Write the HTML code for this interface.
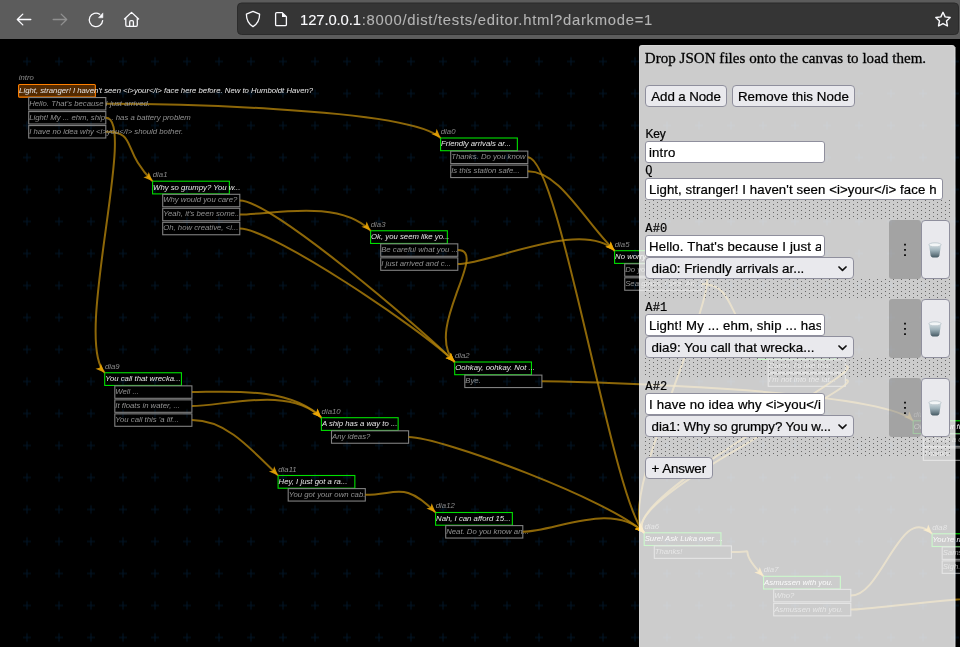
<!DOCTYPE html>
<html><head><meta charset="utf-8"><title>editor</title>
<style>
*{box-sizing:border-box;margin:0;padding:0}
html,body{width:960px;height:647px;overflow:hidden;background:#000}
body{position:relative;font-family:"Liberation Sans",sans-serif}
#tb{position:absolute;left:0;top:0;width:960px;height:39px;background:#5c5c5c}
#url{will-change:transform}
#url{position:absolute;left:300.3px;top:11px;font-size:14.8px;line-height:18px;white-space:nowrap;color:#b4b4b4;-webkit-text-stroke:0.1px currentColor}
#url .u1{color:#fbfbfe;letter-spacing:-0.1px}
#url .u2{letter-spacing:0.73px;margin-left:0.9px}
#cv{position:absolute;left:0;top:39px;will-change:transform}
#cv text{font-family:"Liberation Sans",sans-serif;font-style:italic;font-size:7.75px}
#cv .lb{fill:#8a8a8a}
#cv .qt{fill:#e8e8e8}
#cv .at{fill:#929292}
#panel{position:absolute;left:639px;top:45px;width:316px;height:620px;background:rgba(255,255,255,0.8);box-shadow:inset 0 0 0 1px rgba(255,255,255,0.18);border-radius:3px}
#panel2{position:absolute;left:955px;top:47px;width:1px;height:620px;background:rgba(255,255,255,0.42)}
#pc{position:absolute;left:0;top:0;width:960px;height:647px;overflow:hidden;will-change:transform;color:#000;-webkit-text-stroke:0.22px #000}
#pc>div{position:absolute;white-space:nowrap}
.serif{font-family:"Liberation Serif",serif;font-size:15px;line-height:18px;color:#000;letter-spacing:0.04px;-webkit-text-stroke:0.3px #000}
.sans{font-size:12px;line-height:15px;letter-spacing:-0.1px}
.mono{font-family:"Liberation Mono",monospace;font-size:12px;letter-spacing:0.2px;line-height:14px;-webkit-text-stroke:0.2px #000}
.btn{height:22px;background:#e9e9ed;border:1px solid #8f8f9d;border-radius:4px;font-size:13.33px;line-height:20px;padding-top:1px;text-align:center;letter-spacing:-0.1px}
.inp{height:22px;background:#fff;border:1px solid #8f8f9d;border-radius:3px;font-size:13.2px;line-height:20px;padding-top:1px;padding-left:3px;overflow:hidden;letter-spacing:0.16px}
.sel{height:22px;background:#e9e9ed;border:1px solid #8f8f9d;border-radius:4px;font-size:13.33px;line-height:21px;padding-left:5.6px;overflow:hidden;letter-spacing:-0.045px}
.inp>span{display:block;overflow:hidden;margin-right:2.2px}
.sel .chev{position:absolute;right:5.2px;top:8.2px}
.hdl{width:32px;height:58.5px;background:rgba(0,0,0,0.2);border-radius:3px}
.hdl i{position:absolute;left:15.1px;width:1.7px;height:1.7px;background:#0c0c0c}
.trash{width:29px;height:59px;background:#e9e9ed;border:1px solid #8f8f9d;border-radius:4px}
.dz{left:645px;width:306px;height:20px;overflow:hidden}
.dz svg{display:block}
</style></head>
<body>
<svg id="cv" width="960" height="608" viewBox="0 39 960 608">
<defs>
<pattern id="grid" x="11" y="13.5" width="32" height="32" patternUnits="userSpaceOnUse">
<path d="M12 16H20M16 11.8V20.2" stroke="#021527" stroke-width="1" fill="none"/>
</pattern>
</defs>
<rect x="0" y="39" width="960" height="608" fill="#000"/>
<rect x="0" y="39" width="960" height="608" fill="url(#grid)"/>
<text x="18.80" y="80.00" class="lb">intro</text>
<rect x="18.60" y="84.45" width="76.75" height="12.70" rx="1" fill="rgba(255,128,0,0.33)" stroke="#ff8000" stroke-width="1.1"/>
<rect x="28.70" y="97.55" width="77.10" height="12.45" fill="none" stroke="#808080" stroke-width="1.1"/>
<rect x="28.70" y="111.55" width="77.10" height="12.45" fill="none" stroke="#808080" stroke-width="1.1"/>
<rect x="28.70" y="125.55" width="77.10" height="12.45" fill="none" stroke="#808080" stroke-width="1.1"/>
<text x="440.80" y="134.00" class="lb">dia0</text>
<rect x="440.60" y="138.00" width="76.75" height="12.70" fill="none" stroke="#00e000" stroke-width="1.1"/>
<rect x="450.70" y="151.10" width="77.10" height="12.45" fill="none" stroke="#808080" stroke-width="1.1"/>
<rect x="450.70" y="165.10" width="77.10" height="12.45" fill="none" stroke="#808080" stroke-width="1.1"/>
<text x="152.80" y="177.00" class="lb">dia1</text>
<rect x="152.60" y="181.20" width="76.75" height="12.70" fill="none" stroke="#00e000" stroke-width="1.1"/>
<rect x="162.70" y="194.30" width="77.10" height="12.45" fill="none" stroke="#808080" stroke-width="1.1"/>
<rect x="162.70" y="208.30" width="77.10" height="12.45" fill="none" stroke="#808080" stroke-width="1.1"/>
<rect x="162.70" y="222.30" width="77.10" height="12.45" fill="none" stroke="#808080" stroke-width="1.1"/>
<text x="370.80" y="227.00" class="lb">dia3</text>
<rect x="370.60" y="230.75" width="76.75" height="12.70" fill="none" stroke="#00e000" stroke-width="1.1"/>
<rect x="380.70" y="243.85" width="77.10" height="12.45" fill="none" stroke="#808080" stroke-width="1.1"/>
<rect x="380.70" y="257.85" width="77.10" height="12.45" fill="none" stroke="#808080" stroke-width="1.1"/>
<text x="614.80" y="247.00" class="lb">dia5</text>
<rect x="614.60" y="250.70" width="76.75" height="12.70" fill="none" stroke="#00e000" stroke-width="1.1"/>
<rect x="624.70" y="263.80" width="77.10" height="12.45" fill="none" stroke="#808080" stroke-width="1.1"/>
<rect x="624.70" y="277.80" width="77.10" height="12.45" fill="none" stroke="#808080" stroke-width="1.1"/>
<text x="454.90" y="358.00" class="lb">dia2</text>
<rect x="454.70" y="362.00" width="76.75" height="12.70" fill="none" stroke="#00e000" stroke-width="1.1"/>
<rect x="464.80" y="375.10" width="77.10" height="12.45" fill="none" stroke="#808080" stroke-width="1.1"/>
<text x="104.90" y="369.00" class="lb">dia9</text>
<rect x="104.70" y="372.75" width="76.75" height="12.70" fill="none" stroke="#00e000" stroke-width="1.1"/>
<rect x="114.80" y="385.85" width="77.10" height="12.45" fill="none" stroke="#808080" stroke-width="1.1"/>
<rect x="114.80" y="399.85" width="77.10" height="12.45" fill="none" stroke="#808080" stroke-width="1.1"/>
<rect x="114.80" y="413.85" width="77.10" height="12.45" fill="none" stroke="#808080" stroke-width="1.1"/>
<text x="321.60" y="414.00" class="lb">dia10</text>
<rect x="321.40" y="417.70" width="76.75" height="12.70" fill="none" stroke="#00e000" stroke-width="1.1"/>
<rect x="331.50" y="430.80" width="77.10" height="12.45" fill="none" stroke="#808080" stroke-width="1.1"/>
<text x="278.30" y="472.00" class="lb">dia11</text>
<rect x="278.10" y="475.50" width="76.75" height="12.70" fill="none" stroke="#00e000" stroke-width="1.1"/>
<rect x="288.20" y="488.60" width="77.10" height="12.45" fill="none" stroke="#808080" stroke-width="1.1"/>
<text x="435.80" y="508.00" class="lb">dia12</text>
<rect x="435.60" y="512.50" width="76.75" height="12.70" fill="none" stroke="#00e000" stroke-width="1.1"/>
<rect x="445.70" y="525.60" width="77.10" height="12.45" fill="none" stroke="#808080" stroke-width="1.1"/>
<text x="644.40" y="529.00" class="lb">dia6</text>
<rect x="644.20" y="532.80" width="76.75" height="12.70" fill="none" stroke="#00e000" stroke-width="1.1"/>
<rect x="654.30" y="545.90" width="77.10" height="12.45" fill="none" stroke="#808080" stroke-width="1.1"/>
<text x="763.80" y="572.00" class="lb">dia7</text>
<rect x="763.60" y="576.30" width="76.75" height="12.70" fill="none" stroke="#00e000" stroke-width="1.1"/>
<rect x="773.70" y="589.40" width="77.10" height="12.45" fill="none" stroke="#808080" stroke-width="1.1"/>
<rect x="773.70" y="603.40" width="77.10" height="12.45" fill="none" stroke="#808080" stroke-width="1.1"/>
<text x="932.30" y="530.00" class="lb">dia8</text>
<rect x="932.10" y="533.80" width="76.75" height="12.70" fill="none" stroke="#00e000" stroke-width="1.1"/>
<rect x="942.20" y="546.90" width="77.10" height="12.45" fill="none" stroke="#808080" stroke-width="1.1"/>
<rect x="942.20" y="560.90" width="77.10" height="12.45" fill="none" stroke="#808080" stroke-width="1.1"/>
<text x="758.30" y="343.00" class="lb">dia4</text>
<rect x="758.10" y="346.75" width="76.75" height="12.70" fill="none" stroke="#00e000" stroke-width="1.1"/>
<rect x="768.20" y="359.85" width="77.10" height="12.45" fill="none" stroke="#808080" stroke-width="1.1"/>
<rect x="768.20" y="373.85" width="77.10" height="12.45" fill="none" stroke="#808080" stroke-width="1.1"/>
<text x="913.40" y="417.00" class="lb">dia13</text>
<rect x="913.20" y="420.80" width="76.75" height="12.70" fill="none" stroke="#00e000" stroke-width="1.1"/>
<rect x="923.30" y="433.90" width="77.10" height="12.45" fill="none" stroke="#808080" stroke-width="1.1"/>
<rect x="923.30" y="447.90" width="77.10" height="12.45" fill="none" stroke="#808080" stroke-width="1.1"/>
<g fill="none" stroke="#b8860b" stroke-opacity="0.77" stroke-width="2">
<path d="M105.80 103.77C137.80 103.77 408.60 106.00 440.60 138.00"/>
<path d="M105.80 117.77C137.80 117.77 72.70 340.75 104.70 372.75"/>
<path d="M105.80 131.78C137.80 131.78 120.60 149.20 152.60 181.20"/>
<path d="M239.80 200.52C271.80 200.52 422.70 330.00 454.70 362.00"/>
<path d="M239.80 214.52C271.80 214.52 338.60 198.75 370.60 230.75"/>
<path d="M239.80 228.52C271.80 228.52 422.70 330.00 454.70 362.00"/>
<path d="M527.80 157.32C559.80 157.32 612.20 500.80 644.20 532.80"/>
<path d="M527.80 171.32C559.80 171.32 582.60 218.70 614.60 250.70"/>
<path d="M457.80 250.07C489.80 250.07 422.70 330.00 454.70 362.00"/>
<path d="M457.80 264.08C489.80 264.08 582.60 218.70 614.60 250.70"/>
<path d="M541.90 381.33C573.90 381.33 881.20 388.80 913.20 420.80"/>
<path d="M191.90 392.08C223.90 392.08 289.40 385.70 321.40 417.70"/>
<path d="M191.90 406.08C223.90 406.08 289.40 385.70 321.40 417.70"/>
<path d="M191.90 420.08C223.90 420.08 246.10 443.50 278.10 475.50"/>
<path d="M408.60 437.03C440.60 437.03 612.20 500.80 644.20 532.80"/>
<path d="M365.30 494.83C397.30 494.83 403.60 480.50 435.60 512.50"/>
<path d="M522.80 531.83C554.80 531.83 612.20 500.80 644.20 532.80"/>
<path d="M701.80 270.03C733.80 270.03 612.20 500.80 644.20 532.80"/>
<path d="M701.80 284.03C733.80 284.03 726.10 314.75 758.10 346.75"/>
<path d="M845.30 366.08C877.30 366.08 612.20 500.80 644.20 532.80"/>
<path d="M845.30 380.08C877.30 380.08 612.20 500.80 644.20 532.80"/>
<path d="M731.40 552.12C763.40 552.12 731.60 544.30 763.60 576.30"/>
<path d="M850.80 595.62C882.80 595.62 900.10 501.80 932.10 533.80"/>
<path d="M850.80 609.62C882.80 609.62 1068.00 578.00 1100.00 610.00"/>
</g><g fill="#eca604" fill-opacity="0.88">
<path d="M440.60 138.00 L431.39 134.09 L435.51 132.91 L436.69 128.79Z"/>
<path d="M104.70 372.75 L95.49 368.84 L99.61 367.66 L100.79 363.54Z"/>
<path d="M152.60 181.20 L143.39 177.29 L147.51 176.11 L148.69 171.99Z"/>
<path d="M454.70 362.00 L445.49 358.09 L449.61 356.91 L450.79 352.79Z"/>
<path d="M370.60 230.75 L361.39 226.84 L365.51 225.66 L366.69 221.54Z"/>
<path d="M454.70 362.00 L445.49 358.09 L449.61 356.91 L450.79 352.79Z"/>
<path d="M644.20 532.80 L634.99 528.89 L639.11 527.71 L640.29 523.59Z"/>
<path d="M614.60 250.70 L605.39 246.79 L609.51 245.61 L610.69 241.49Z"/>
<path d="M454.70 362.00 L445.49 358.09 L449.61 356.91 L450.79 352.79Z"/>
<path d="M614.60 250.70 L605.39 246.79 L609.51 245.61 L610.69 241.49Z"/>
<path d="M913.20 420.80 L903.99 416.89 L908.11 415.71 L909.29 411.59Z"/>
<path d="M321.40 417.70 L312.19 413.79 L316.31 412.61 L317.49 408.49Z"/>
<path d="M321.40 417.70 L312.19 413.79 L316.31 412.61 L317.49 408.49Z"/>
<path d="M278.10 475.50 L268.89 471.59 L273.01 470.41 L274.19 466.29Z"/>
<path d="M644.20 532.80 L634.99 528.89 L639.11 527.71 L640.29 523.59Z"/>
<path d="M435.60 512.50 L426.39 508.59 L430.51 507.41 L431.69 503.29Z"/>
<path d="M644.20 532.80 L634.99 528.89 L639.11 527.71 L640.29 523.59Z"/>
<path d="M644.20 532.80 L634.99 528.89 L639.11 527.71 L640.29 523.59Z"/>
<path d="M758.10 346.75 L748.89 342.84 L753.01 341.66 L754.19 337.54Z"/>
<path d="M644.20 532.80 L634.99 528.89 L639.11 527.71 L640.29 523.59Z"/>
<path d="M644.20 532.80 L634.99 528.89 L639.11 527.71 L640.29 523.59Z"/>
<path d="M763.60 576.30 L754.39 572.39 L758.51 571.21 L759.69 567.09Z"/>
<path d="M932.10 533.80 L922.89 529.89 L927.01 528.71 L928.19 524.59Z"/>
</g>
<text x="19.10" y="93.00" class="qt">Light, stranger! I haven't seen &lt;i&gt;your&lt;/i&gt; face here before. New to Humboldt Haven?</text>
<text x="29.20" y="106.00" class="at">Hello. That's because I just arrived.</text>
<text x="29.20" y="120.00" class="at">Light! My ... ehm, ship ... has a battery problem</text>
<text x="29.20" y="134.00" class="at">I have no idea why &lt;i&gt;you&lt;/i&gt; should bother.</text>
<text x="441.10" y="146.00" class="qt">Friendly arrivals ar...</text>
<text x="451.20" y="159.00" class="at">Thanks. Do you know </text>
<text x="451.20" y="173.00" class="at">Is this station safe...</text>
<text x="153.10" y="190.00" class="qt">Why so grumpy? You w...</text>
<text x="163.20" y="202.00" class="at">Why would you care?</text>
<text x="163.20" y="216.00" class="at">Yeah, it's been some..</text>
<text x="163.20" y="230.00" class="at">Oh, how creative, &lt;i...</text>
<text x="371.10" y="239.00" class="qt">Ok, you seem like yo...</text>
<text x="381.20" y="252.00" class="at">Be careful what you ...</text>
<text x="381.20" y="266.00" class="at">I just arrived and c...</text>
<text x="615.10" y="259.00" class="qt">No worry, we'll fix ...</text>
<text x="625.20" y="272.00" class="at">Do you need a hand w...</text>
<text x="625.20" y="286.00" class="at">Sea grass, I see. An...</text>
<text x="455.20" y="370.00" class="qt">Oohkay, oohkay. Not ...</text>
<text x="465.30" y="383.00" class="at">Bye.</text>
<text x="105.20" y="381.00" class="qt">You call that wrecka...</text>
<text x="115.30" y="394.00" class="at">Well ...</text>
<text x="115.30" y="408.00" class="at">It floats in water, ...</text>
<text x="115.30" y="422.00" class="at">You call this 'a lif...</text>
<text x="321.90" y="426.00" class="qt">A ship has a way to ...</text>
<text x="332.00" y="439.00" class="at">Any ideas?</text>
<text x="278.60" y="484.00" class="qt">Hey, I just got a ra...</text>
<text x="288.70" y="497.00" class="at">You got your own cab.</text>
<text x="436.10" y="521.00" class="qt">Nah, I can afford 15...</text>
<text x="446.20" y="534.00" class="at">Neat. Do you know an...</text>
<text x="644.70" y="541.00" class="qt">Sure! Ask Luka over ...</text>
<text x="654.80" y="554.00" class="at">Thanks!</text>
<text x="764.10" y="585.00" class="qt">Asmussen with you.</text>
<text x="774.20" y="598.00" class="at">Who?</text>
<text x="774.20" y="612.00" class="at">Asmussen with you.</text>
<text x="932.60" y="542.00" class="qt">You're right. Sams...</text>
<text x="942.70" y="555.00" class="at">Sams is the best ...</text>
<text x="942.70" y="569.00" class="at">Sigh. Fine, lead ...</text>
<text x="758.60" y="355.00" class="qt">That's a lot of mon...</text>
<text x="768.70" y="368.00" class="at">Damn, I'd like that ...</text>
<text x="768.70" y="382.00" class="at">I'm not into the lat...</text>
<text x="913.70" y="429.00" class="qt">Ok, it's your funer...</text>
<text x="923.80" y="442.00" class="at">Is there a cafe ...</text>
<text x="923.80" y="456.00" class="at">Thanks.</text>
</svg>
<div id="panel">
</div><div id="panel2"></div>
<div id="pc">
<svg width="0" height="0" style="position:absolute"><defs><pattern id="dots" x="0" y="0" width="8" height="4" patternUnits="userSpaceOnUse"><rect x="0" y="0" width="1" height="1" fill="#686868"/><rect x="4" y="2" width="1" height="1" fill="#686868"/></pattern></defs></svg>
<div class="serif" style="left:644.8px;top:49.4px">Drop JSON files onto the canvas to load them.</div>
<div class="btn" style="left:645px;top:85px;width:82px"><span>Add a Node</span></div>
<div class="btn" style="left:732px;top:85px;width:123px;letter-spacing:0.1px"><span>Remove this Node</span></div>
<div class="sans" style="left:645.4px;top:126.6px">Key</div>
<div class="inp" style="left:645px;top:141px;width:179.5px"><span>intro</span></div>
<div class="mono" style="left:645.3px;top:164px">Q</div>
<div class="inp" style="left:645px;top:178px;width:297.5px;letter-spacing:0.1px"><span>Light, stranger! I haven't seen &lt;i&gt;your&lt;/i&gt; face h</span></div>
<div class="dz" style="top:200px"><svg width="306" height="20"><rect width="306" height="20" fill="url(#dots)"/></svg></div><div class="dz" style="top:279px"><svg width="306" height="20"><rect width="306" height="20" fill="url(#dots)"/></svg></div><div class="dz" style="top:358px"><svg width="306" height="20"><rect width="306" height="20" fill="url(#dots)"/></svg></div><div class="dz" style="top:437px"><svg width="306" height="20"><rect width="306" height="20" fill="url(#dots)"/></svg></div>

<div class="mono" style="left:645.3px;top:221.6px">A#0</div>
<div class="inp" style="left:645px;top:235px;width:179.5px"><span>Hello. That's because I just arrived.</span></div>
<div class="sel" style="left:645px;top:257px;width:208.5px;letter-spacing:0.005px"><span>dia0: Friendly arrivals ar...</span>
<svg class="chev" width="9" height="6" viewBox="0 0 9 6"><path d="M1 1L4.5 4.4L8 1" fill="none" stroke="#111" stroke-width="1.7" stroke-linecap="round" stroke-linejoin="round"/></svg></div>
<div class="hdl" style="left:889px;top:220px"><svg width="32" height="59" style="position:absolute;left:0;top:0"><path d="M15.1 23.8h1.8v1.8h-1.8zM15.1 29h1.8v1.8h-1.8zM15.1 34.3h1.8v1.8h-1.8z" fill="#080808"/></svg></div>
<div class="trash" style="left:921px;top:220px">
<svg width="14" height="16" viewBox="0 0 14 16" style="position:absolute;left:6.4px;top:20.5px">
<defs><linearGradient id="tg0" x1="0" y1="0" x2="0" y2="1"><stop offset="0" stop-color="#d2dde1"/><stop offset="0.45" stop-color="#9db0b8"/><stop offset="1" stop-color="#465a64"/></linearGradient></defs>
<path d="M1 3L2.6 13.6Q2.9 15.4 4.6 15.4H9.4Q11.1 15.4 11.4 13.6L13 3Z" fill="url(#tg0)"/>
<ellipse cx="7" cy="2.8" rx="6.2" ry="2" fill="#f2f5f6" stroke="#b7c4ca" stroke-width="0.8"/>
</svg></div>
<div class="mono" style="left:645.3px;top:300.6px">A#1</div>
<div class="inp" style="left:645px;top:314px;width:179.5px"><span>Light! My ... ehm, ship ... has a battery problem</span></div>
<div class="sel" style="left:645px;top:336px;width:208.5px;letter-spacing:0.045px"><span>dia9: You call that wrecka...</span>
<svg class="chev" width="9" height="6" viewBox="0 0 9 6"><path d="M1 1L4.5 4.4L8 1" fill="none" stroke="#111" stroke-width="1.7" stroke-linecap="round" stroke-linejoin="round"/></svg></div>
<div class="hdl" style="left:889px;top:299px"><svg width="32" height="59" style="position:absolute;left:0;top:0"><path d="M15.1 23.8h1.8v1.8h-1.8zM15.1 29h1.8v1.8h-1.8zM15.1 34.3h1.8v1.8h-1.8z" fill="#080808"/></svg></div>
<div class="trash" style="left:921px;top:299px">
<svg width="14" height="16" viewBox="0 0 14 16" style="position:absolute;left:6.4px;top:20.5px">
<defs><linearGradient id="tg1" x1="0" y1="0" x2="0" y2="1"><stop offset="0" stop-color="#d2dde1"/><stop offset="0.45" stop-color="#9db0b8"/><stop offset="1" stop-color="#465a64"/></linearGradient></defs>
<path d="M1 3L2.6 13.6Q2.9 15.4 4.6 15.4H9.4Q11.1 15.4 11.4 13.6L13 3Z" fill="url(#tg1)"/>
<ellipse cx="7" cy="2.8" rx="6.2" ry="2" fill="#f2f5f6" stroke="#b7c4ca" stroke-width="0.8"/>
</svg></div>
<div class="mono" style="left:645.3px;top:379.6px">A#2</div>
<div class="inp" style="left:645px;top:393px;width:179.5px"><span>I have no idea why &lt;i&gt;you&lt;/i&gt; should bother.</span></div>
<div class="sel" style="left:645px;top:415px;width:208.5px;letter-spacing:-0.1px"><span>dia1: Why so grumpy? You w...</span>
<svg class="chev" width="9" height="6" viewBox="0 0 9 6"><path d="M1 1L4.5 4.4L8 1" fill="none" stroke="#111" stroke-width="1.7" stroke-linecap="round" stroke-linejoin="round"/></svg></div>
<div class="hdl" style="left:889px;top:378px"><svg width="32" height="59" style="position:absolute;left:0;top:0"><path d="M15.1 23.8h1.8v1.8h-1.8zM15.1 29h1.8v1.8h-1.8zM15.1 34.3h1.8v1.8h-1.8z" fill="#080808"/></svg></div>
<div class="trash" style="left:921px;top:378px">
<svg width="14" height="16" viewBox="0 0 14 16" style="position:absolute;left:6.4px;top:20.5px">
<defs><linearGradient id="tg2" x1="0" y1="0" x2="0" y2="1"><stop offset="0" stop-color="#d2dde1"/><stop offset="0.45" stop-color="#9db0b8"/><stop offset="1" stop-color="#465a64"/></linearGradient></defs>
<path d="M1 3L2.6 13.6Q2.9 15.4 4.6 15.4H9.4Q11.1 15.4 11.4 13.6L13 3Z" fill="url(#tg2)"/>
<ellipse cx="7" cy="2.8" rx="6.2" ry="2" fill="#f2f5f6" stroke="#b7c4ca" stroke-width="0.8"/>
</svg></div>
<div class="btn" style="left:645px;top:457px;width:67.6px"><span>+ Answer</span></div>
</div>
<div id="tb">
<svg width="960" height="39" viewBox="0 0 960 39" style="position:absolute;left:0;top:0">
<rect x="237.5" y="3" width="721" height="31.5" rx="4" fill="#353535" stroke="#2b2b2b" stroke-width="1"/>
<!-- back -->
<path d="M30.8 19.5H17.4M22.8 14.1L17.3 19.5L22.8 24.9" fill="none" stroke="#fbfbfe" stroke-width="1.3" stroke-linecap="round" stroke-linejoin="round"/>
<!-- forward -->
<path d="M53.2 19.5H66.6M61.2 14.1L66.7 19.5L61.2 24.9" fill="none" stroke="#909090" stroke-width="1.3" stroke-linecap="round" stroke-linejoin="round"/>
<!-- reload -->
<path d="M102.65 20.6A6.7 6.7 0 1 1 99.7 14.3" fill="none" stroke="#fbfbfe" stroke-width="1.3" stroke-linecap="round"/>
<path d="M102.9 12.9V17.8H98.5Z" fill="#fbfbfe" stroke="#fbfbfe" stroke-width="0.5" stroke-linejoin="round"/>
<!-- home -->
<path d="M124.5 19L131.55 12.4L138.6 19M125.8 18V25.1Q125.8 26.3 127 26.3H136.1Q137.3 26.3 137.3 25.1V18M129.7 26.2V21.9Q129.7 20.7 130.9 20.7H132.2Q133.4 20.7 133.4 21.9V26.2" fill="none" stroke="#fbfbfe" stroke-width="1.3" stroke-linecap="round" stroke-linejoin="round"/>
<!-- shield -->
<path d="M253 11.3L259.6 14.2Q259.6 22.6 253 26.6Q246.4 22.6 246.4 14.2Z" fill="none" stroke="#fbfbfe" stroke-width="1.3" stroke-linejoin="round"/>
<!-- page -->
<path d="M276.8 12.6H282.2L286.4 16.8V24.4Q286.4 25.6 285.2 25.6H276.8Q275.6 25.6 275.6 24.4V13.8Q275.6 12.6 276.8 12.6Z" fill="none" stroke="#fbfbfe" stroke-width="1.3" stroke-linejoin="round"/>
<path d="M282 12.6V17H286.4Z" fill="#fbfbfe"/>
<!-- star -->
<path d="M943 12.3L945.15 16.9L950.2 17.55L946.5 21L947.45 26L943 23.55L938.55 26L939.5 21L935.8 17.55L940.85 16.9Z" fill="none" stroke="#fbfbfe" stroke-width="1.4" stroke-linejoin="round"/>
</svg>
<div id="url"><span class="u1">127.0.0.1</span><span class="u2">:8000/dist/tests/editor.html?darkmode=1</span></div>
</div>
</body></html>
